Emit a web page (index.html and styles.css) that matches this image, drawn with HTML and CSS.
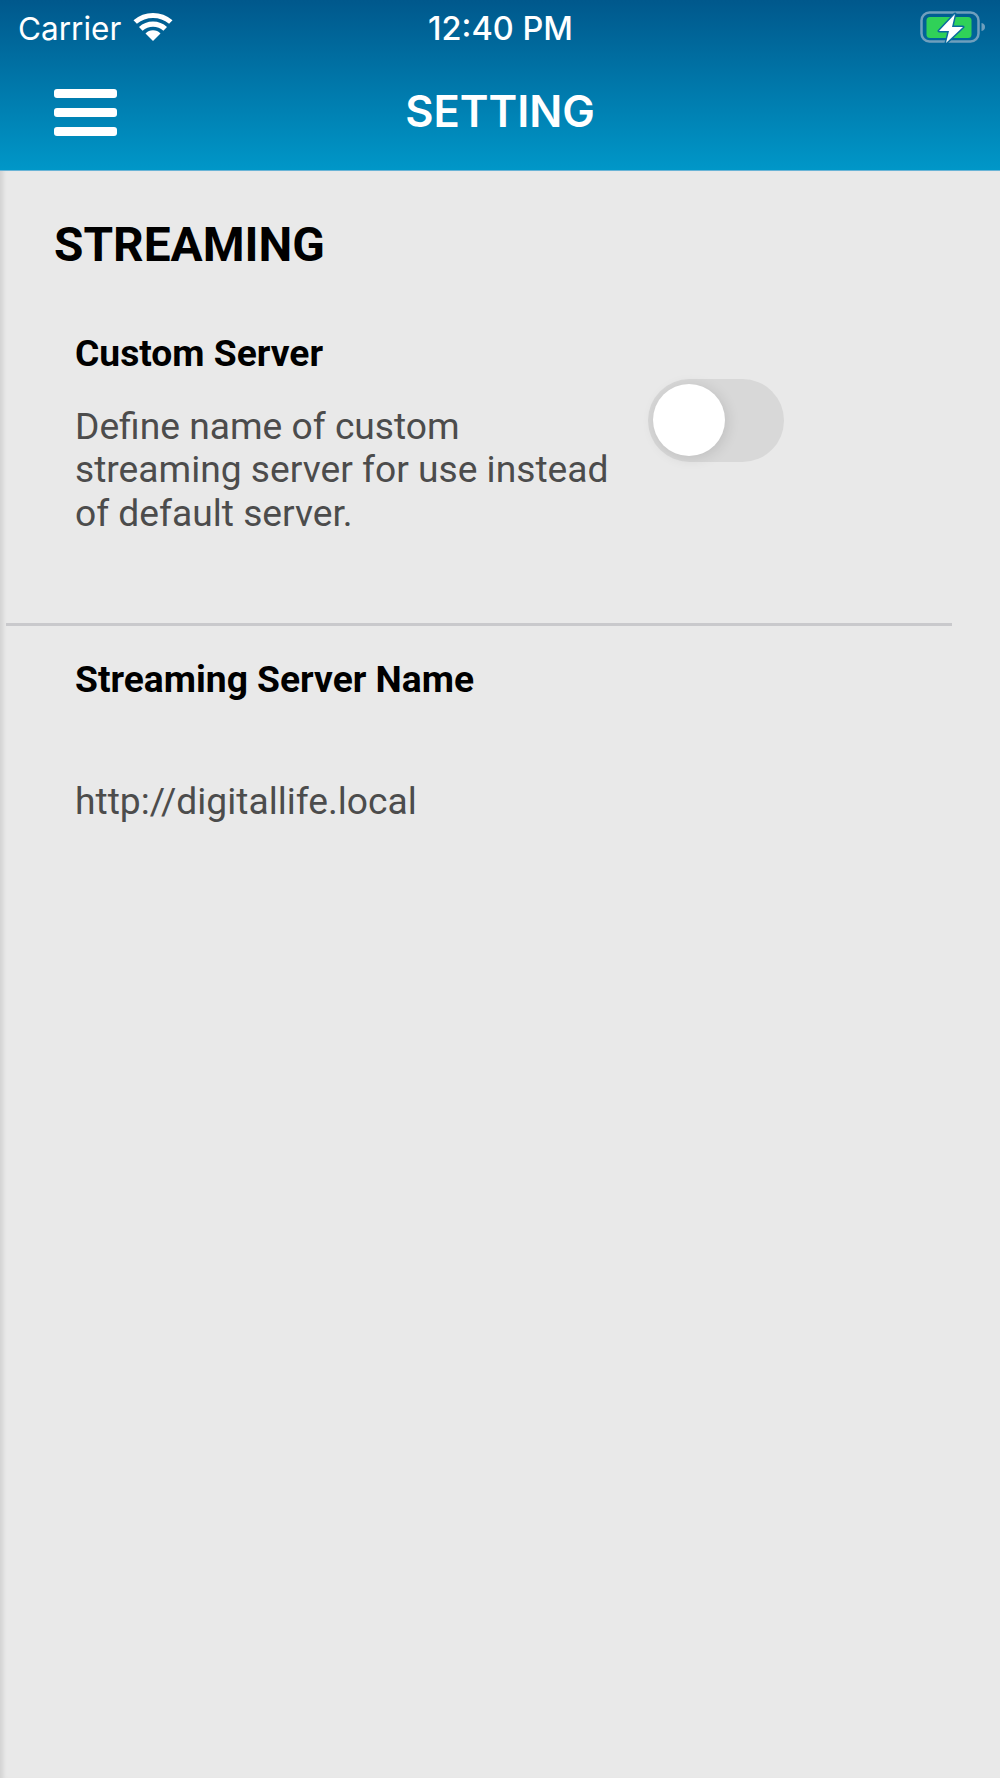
FILE: index.html
```html
<!doctype html>
<html lang="en">
  <head>
    <meta charset="UTF-8" />
    <title>Setting</title>
    <link rel="stylesheet" href="styles.css">
  </head>
  <body>
    <header>
      <div class="status-bar">
        <div class="status-left">
          <span>Carrier</span>
          <svg class="wifi" viewBox="0 0 40 30" width="40" height="30">
            <path d="M20 29l-7.500-7.600a10.500 10.500 0 0 1 15 0z" fill="#fff" />
            <path d="M20 9.500a20.500 20.500 0 0 0-14 5.500l3.600 3.700a15.500 15.500 0 0 1 20.800 0l3.600-3.700A20.500 20.500 0 0 0 20 9.500z" fill="#fff" />
            <path d="M20 1A31 31 0 0 0 0.500 8.200l3.400 3.500a26 26 0 0 1 32.200 0l3.400-3.500A31 31 0 0 0 20 1z" fill="#fff" />
          </svg>
        </div>
        <span class="status-time">12:40 PM</span>
        <svg class="battery" viewBox="0 0 66 32" width="66" height="32">
          <rect x="1.500" y="1.500" width="57" height="29" rx="8" fill="none" stroke="#6f9fbd" stroke-width="2.500" />
          <rect x="6.500" y="6" width="45" height="21" rx="3.500" fill="#30d158" />
          <path d="M61.500 12c2.500.6 3.500 2 3.500 4s-1 3.400-3.500 4z" fill="#6f9fbd" />
          <path d="M35 3L19 20h10l-3 12 17-16H32z" fill="#fff" stroke="#0a6a9e" stroke-width="3" stroke-linejoin="round" paint-order="stroke" />
        </svg>
      </div>
      <div class="nav-bar">
        <div class="menu-icon"><i></i><i></i><i></i></div>
        <h1>SETTING</h1>
      </div>
    </header>
    <main>
      <h2>STREAMING</h2>
      <section class="option">
        <h3>Custom Server</h3>
        <div class="option-row">
          <p>Define name of custom streaming server for use instead of default server.</p>
          <div class="toggle"><div class="knob"></div></div>
        </div>
      </section>
      <hr />
      <section class="server">
        <h3>Streaming Server Name</h3>
        <p>http://digitallife.local</p>
      </section>
    </main>
  </body>
</html>
```

FILE: styles.css
```css
* {
  margin: 0;
  padding: 0;
  box-sizing: border-box;
}
html,
body {
  height: 100%;
}
body {
  width: 1000px;
  height: 1778px;
  overflow: hidden;
  display: flex;
  flex-direction: column;
  background-color: #e9e9e9;
  font-family: Roboto, "Liberation Sans", sans-serif;
}
header {
  height: 171px;
  flex-shrink: 0;
  color: #fff;
  background: linear-gradient(#00588c, #0097c8);
  border-bottom: 1px solid #6ab4d6;
}
.status-bar {
  height: 56px;
  padding: 0 14px 0 18px;
  display: grid;
  grid-template-columns: 1fr auto 1fr;
  align-items: center;
  font-size: 31.500px;
  font-family: Inter, Roboto, sans-serif;
}
.status-left {
  display: flex;
  align-items: center;
  gap: 12px;
}
.wifi {
  margin-top: -3px;
}
.status-time {
  font-size: 32.500px;
  font-weight: 500;
  margin-left: -3px;
}
.battery {
  justify-self: end;
  margin-top: -3px;
}
.nav-bar {
  height: 114px;
  padding-left: 54px;
  position: relative;
  display: flex;
  align-items: center;
}
.menu-icon {
  width: 63px;
  display: flex;
  flex-direction: column;
  gap: 10px;
  margin-top: -2px;
}
.menu-icon i {
  display: block;
  height: 9px;
  border-radius: 3px;
  background-color: #fff;
}
.nav-bar h1 {
  position: absolute;
  left: 0;
  right: 0;
  top: 29px;
  text-align: center;
  font-family: Inter, Roboto, sans-serif;
  font-size: 43.500px;
  font-weight: 600;
}
main {
  flex: 1;
  padding: 0 48px 0 6px;
  box-shadow: inset 6px 0 4px -3px #d2d2d2;
}
h2 {
  margin: 47px 0 0 48px;
  font-size: 47.800px;
  line-height: 54px;
  font-weight: 700;
  color: #000;
}
h3 {
  font-size: 37.200px;
  line-height: 42px;
  font-weight: 700;
  color: #000;
}
.option {
  padding-left: 69px;
  margin-top: 60px;
}
.option-row {
  display: flex;
  align-items: flex-start;
  gap: 33px;
  margin-top: 5px;
}
.option-row p {
  width: 540px;
  margin-top: 25.500px;
  font-size: 37.200px;
  line-height: 43.500px;
  color: #4c4c4c;
}
.toggle {
  width: 136px;
  height: 83px;
  padding: 5px;
  flex-shrink: 0;
  border-radius: 42px;
  background-color: #d8d8d8;
}
.knob {
  width: 72px;
  height: 72px;
  border-radius: 50%;
  background-color: #fff;
  box-shadow: 2px 2px 14px rgba(0, 0, 0, 0.12);
}
hr {
  margin-top: 88px;
  width: 946px;
  height: 3px;
  border: 0;
  background-color: #c9c9cc;
}
.server {
  padding-left: 69px;
  margin-top: 32px;
}
.server p {
  margin-top: 80px;
  font-size: 37.200px;
  line-height: 42px;
  color: #4c4c4c;
}
```
